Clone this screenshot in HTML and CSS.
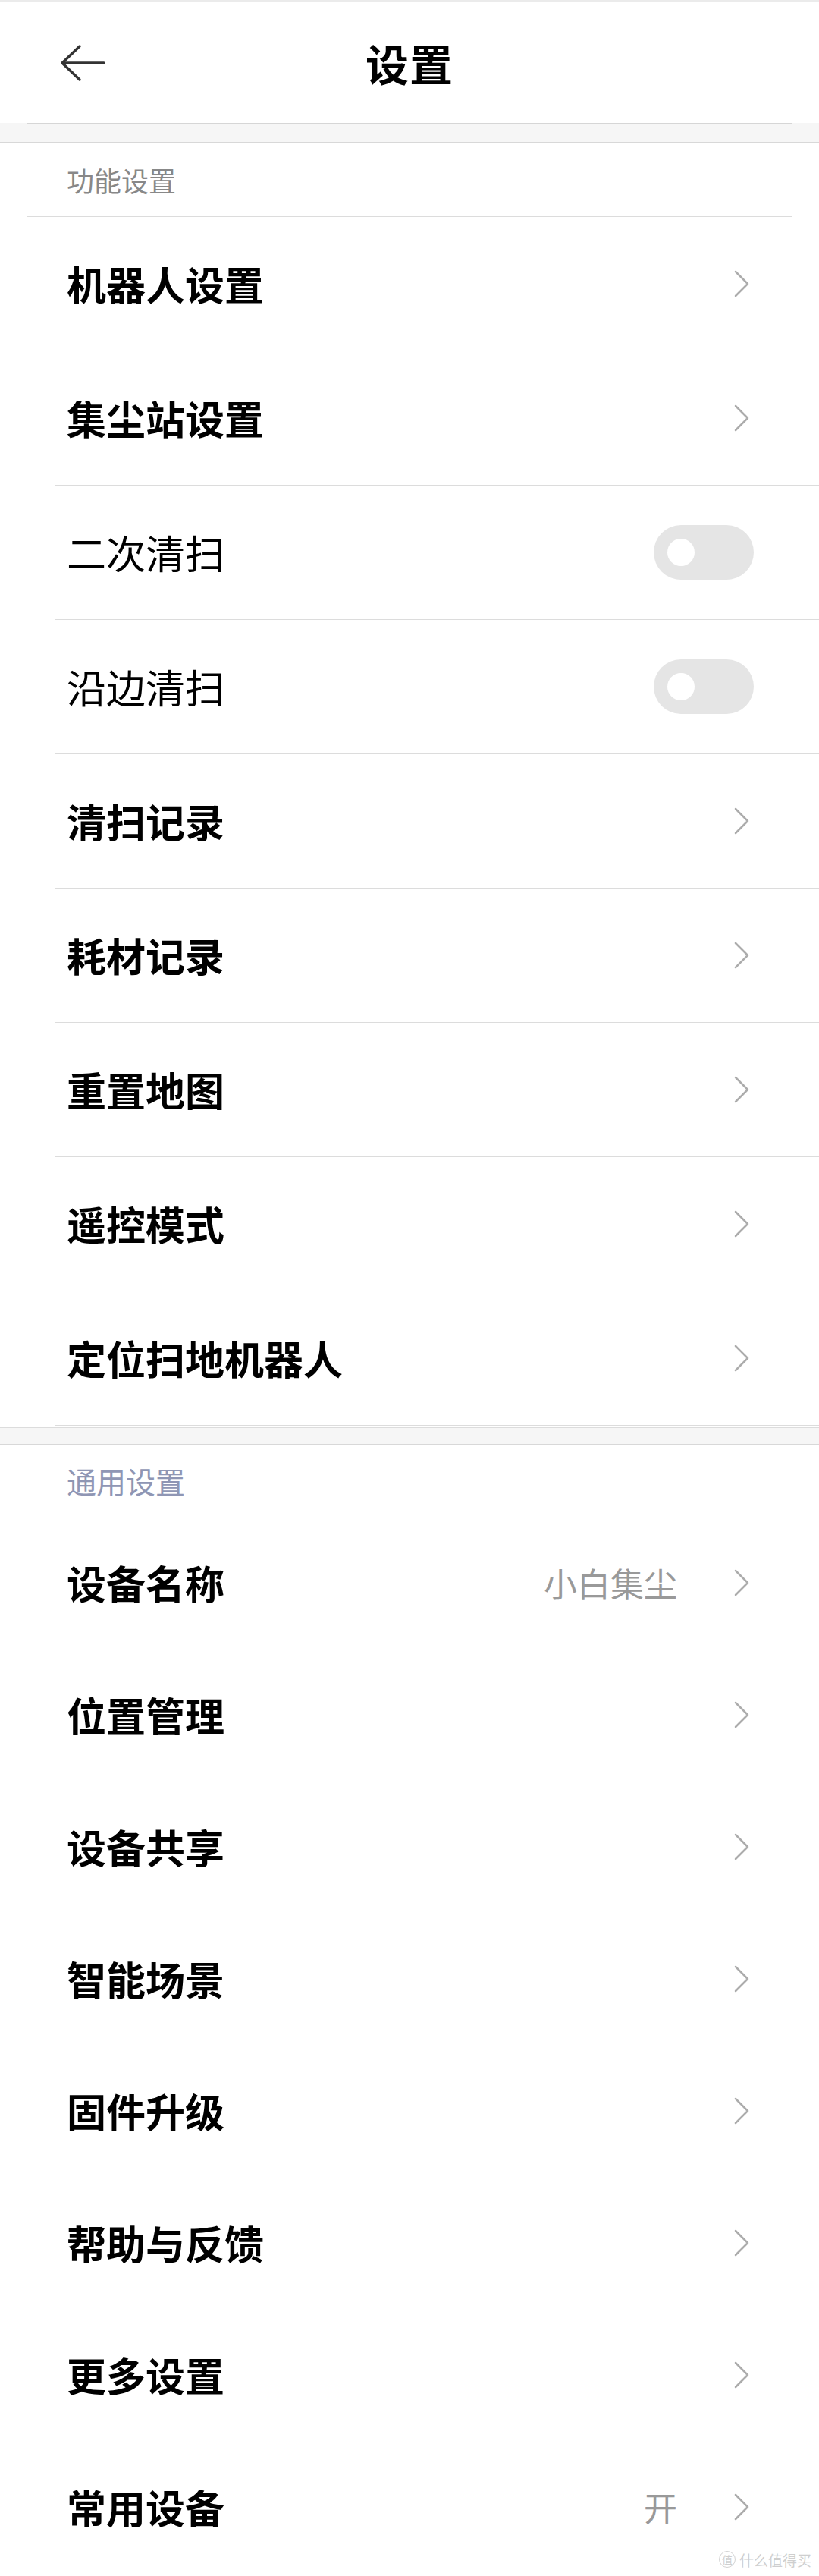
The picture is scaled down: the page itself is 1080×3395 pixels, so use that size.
FILE: index.html
```html
<!DOCTYPE html>
<html lang="zh-CN">
<head>
<meta charset="utf-8">
<title>设置</title>
<link rel="stylesheet" href="styles.css">
</head>
<body>
<div class="page">
  <header class="header">
    <div class="back">
      <svg width="64" height="52" viewBox="0 0 64 52"><path d="M4 26 H59 M27 4 L4 26 L27 48" fill="none" stroke="#333" stroke-width="3.5" stroke-linecap="round" stroke-linejoin="round"/></svg>
    </div>
    <h1 class="title">设置</h1>
    <div></div>
  </header>
  <div class="gap gap-first"><div class="gap-line"></div></div>

  <section class="group">
    <div class="group-title gray">功能设置</div>
    <div class="row line"><span class="label">机器人设置</span><svg class="chev" width="20" height="36" viewBox="0 0 20 36"><polyline points="2,2 18,18 2,34" fill="none" stroke="#acacac" stroke-width="2.5" stroke-linecap="round" stroke-linejoin="round"/></svg></div>
    <div class="row line"><span class="label">集尘站设置</span><svg class="chev" width="20" height="36" viewBox="0 0 20 36"><polyline points="2,2 18,18 2,34" fill="none" stroke="#acacac" stroke-width="2.5" stroke-linecap="round" stroke-linejoin="round"/></svg></div>
    <div class="row line"><span class="label regular">二次清扫</span><span class="toggle"><span class="knob"></span></span></div>
    <div class="row line"><span class="label regular">沿边清扫</span><span class="toggle"><span class="knob"></span></span></div>
    <div class="row line"><span class="label">清扫记录</span><svg class="chev" width="20" height="36" viewBox="0 0 20 36"><polyline points="2,2 18,18 2,34" fill="none" stroke="#acacac" stroke-width="2.5" stroke-linecap="round" stroke-linejoin="round"/></svg></div>
    <div class="row line"><span class="label">耗材记录</span><svg class="chev" width="20" height="36" viewBox="0 0 20 36"><polyline points="2,2 18,18 2,34" fill="none" stroke="#acacac" stroke-width="2.5" stroke-linecap="round" stroke-linejoin="round"/></svg></div>
    <div class="row line"><span class="label">重置地图</span><svg class="chev" width="20" height="36" viewBox="0 0 20 36"><polyline points="2,2 18,18 2,34" fill="none" stroke="#acacac" stroke-width="2.5" stroke-linecap="round" stroke-linejoin="round"/></svg></div>
    <div class="row line"><span class="label">遥控模式</span><svg class="chev" width="20" height="36" viewBox="0 0 20 36"><polyline points="2,2 18,18 2,34" fill="none" stroke="#acacac" stroke-width="2.5" stroke-linecap="round" stroke-linejoin="round"/></svg></div>
    <div class="row line"><span class="label">定位扫地机器人</span><svg class="chev" width="20" height="36" viewBox="0 0 20 36"><polyline points="2,2 18,18 2,34" fill="none" stroke="#acacac" stroke-width="2.5" stroke-linecap="round" stroke-linejoin="round"/></svg></div>
  </section>

  <div class="gap gap-second"></div>

  <section class="group">
    <div class="group-title blue">通用设置</div>
    <div class="row tall"><span class="label">设备名称</span><span class="value">小白集尘</span><svg class="chev" width="20" height="36" viewBox="0 0 20 36"><polyline points="2,2 18,18 2,34" fill="none" stroke="#acacac" stroke-width="2.5" stroke-linecap="round" stroke-linejoin="round"/></svg></div>
    <div class="row tall"><span class="label">位置管理</span><svg class="chev" width="20" height="36" viewBox="0 0 20 36"><polyline points="2,2 18,18 2,34" fill="none" stroke="#acacac" stroke-width="2.5" stroke-linecap="round" stroke-linejoin="round"/></svg></div>
    <div class="row tall"><span class="label">设备共享</span><svg class="chev" width="20" height="36" viewBox="0 0 20 36"><polyline points="2,2 18,18 2,34" fill="none" stroke="#acacac" stroke-width="2.5" stroke-linecap="round" stroke-linejoin="round"/></svg></div>
    <div class="row tall"><span class="label">智能场景</span><svg class="chev" width="20" height="36" viewBox="0 0 20 36"><polyline points="2,2 18,18 2,34" fill="none" stroke="#acacac" stroke-width="2.5" stroke-linecap="round" stroke-linejoin="round"/></svg></div>
    <div class="row tall"><span class="label">固件升级</span><svg class="chev" width="20" height="36" viewBox="0 0 20 36"><polyline points="2,2 18,18 2,34" fill="none" stroke="#acacac" stroke-width="2.5" stroke-linecap="round" stroke-linejoin="round"/></svg></div>
    <div class="row tall"><span class="label">帮助与反馈</span><svg class="chev" width="20" height="36" viewBox="0 0 20 36"><polyline points="2,2 18,18 2,34" fill="none" stroke="#acacac" stroke-width="2.5" stroke-linecap="round" stroke-linejoin="round"/></svg></div>
    <div class="row tall"><span class="label">更多设置</span><svg class="chev" width="20" height="36" viewBox="0 0 20 36"><polyline points="2,2 18,18 2,34" fill="none" stroke="#acacac" stroke-width="2.5" stroke-linecap="round" stroke-linejoin="round"/></svg></div>
    <div class="row tall"><span class="label">常用设备</span><span class="value">开</span><svg class="chev" width="20" height="36" viewBox="0 0 20 36"><polyline points="2,2 18,18 2,34" fill="none" stroke="#acacac" stroke-width="2.5" stroke-linecap="round" stroke-linejoin="round"/></svg></div>
  </section>

  <div class="watermark"><span class="wm-circle">值</span><span class="wm-text">什么值得买</span></div>
</div>
</body>
</html>
```

FILE: styles.css
```css
html, body {
  margin: 0;
  padding: 0;
  background: #ffffff;
}

body {
  font-family: "Noto Sans CJK SC", "Noto Sans", sans-serif;
  color: #000;
}

.page {
  position: relative;
  width: 1080px;
  height: 3395px;
  overflow: hidden;
  background: #fff;
}

.header {
  height: 160px;
  border-top: 2px solid #ebebeb;
  display: grid;
  grid-template-columns: 1fr auto 1fr;
  align-items: center;
}

.back {
  padding-left: 78px;
  display: flex;
  align-items: center;
  padding-top: 2px;
}

.title {
  margin: 0;
  font-size: 57px;
  font-weight: 700;
  line-height: 1;
  letter-spacing: 1px;
}

.gap {
  background: #f6f6f6;
  border-bottom: 1px solid #d8d8d8;
}

.gap-first {
  height: 25px;
}

.gap-line {
  margin: 0 36px;
  height: 1px;
  background: #d6d6d6;
}

.gap-second {
  margin-top: 2px;
  height: 21px;
  border-top: 1px solid #dcdcdc;
}

.group-title {
  display: flex;
  align-items: center;
  padding-left: 52px;
  line-height: 1;
}

.group-title.gray {
  margin: 0 36px;
  height: 97px;
  border-bottom: 1px solid #dcdcdc;
  font-size: 36px;
  color: #888888;
}

.group-title.blue {
  margin: 0 36px;
  height: 95px;
  font-size: 39px;
  color: #8f96b4;
}

.row {
  display: flex;
  align-items: center;
  margin-left: 72px;
  padding-left: 16px;
  padding-right: 86px;
}

.row.line {
  height: 176px;
  border-bottom: 1px solid #dcdcdc;
}

.row.tall {
  height: 174px;
}

.label {
  flex: 1;
  font-size: 52px;
  font-weight: 700;
  line-height: 1;
  color: #000;
}

.label.regular {
  font-weight: 400;
}

.value {
  font-size: 44px;
  color: #999999;
  line-height: 1;
  margin-right: 75px;
}

.chev {
  display: block;
  margin-right: 6px;
}

.toggle {
  position: relative;
  width: 132px;
  height: 72px;
  border-radius: 36px;
  background: #e5e5e5;
}

.knob {
  position: absolute;
  left: 18px;
  top: 18px;
  width: 36px;
  height: 36px;
  border-radius: 50%;
  background: #fff;
}

.watermark {
  position: absolute;
  right: 10px;
  bottom: 11px;
  display: flex;
  align-items: center;
  gap: 5px;
  color: #cfcfcf;
}

.wm-circle {
  width: 20px;
  height: 20px;
  border: 1.5px solid #d2d2d2;
  border-radius: 50%;
  font-size: 14px;
  line-height: 20px;
  text-align: center;
}

.wm-text {
  font-size: 19px;
  line-height: 1;
}
```
